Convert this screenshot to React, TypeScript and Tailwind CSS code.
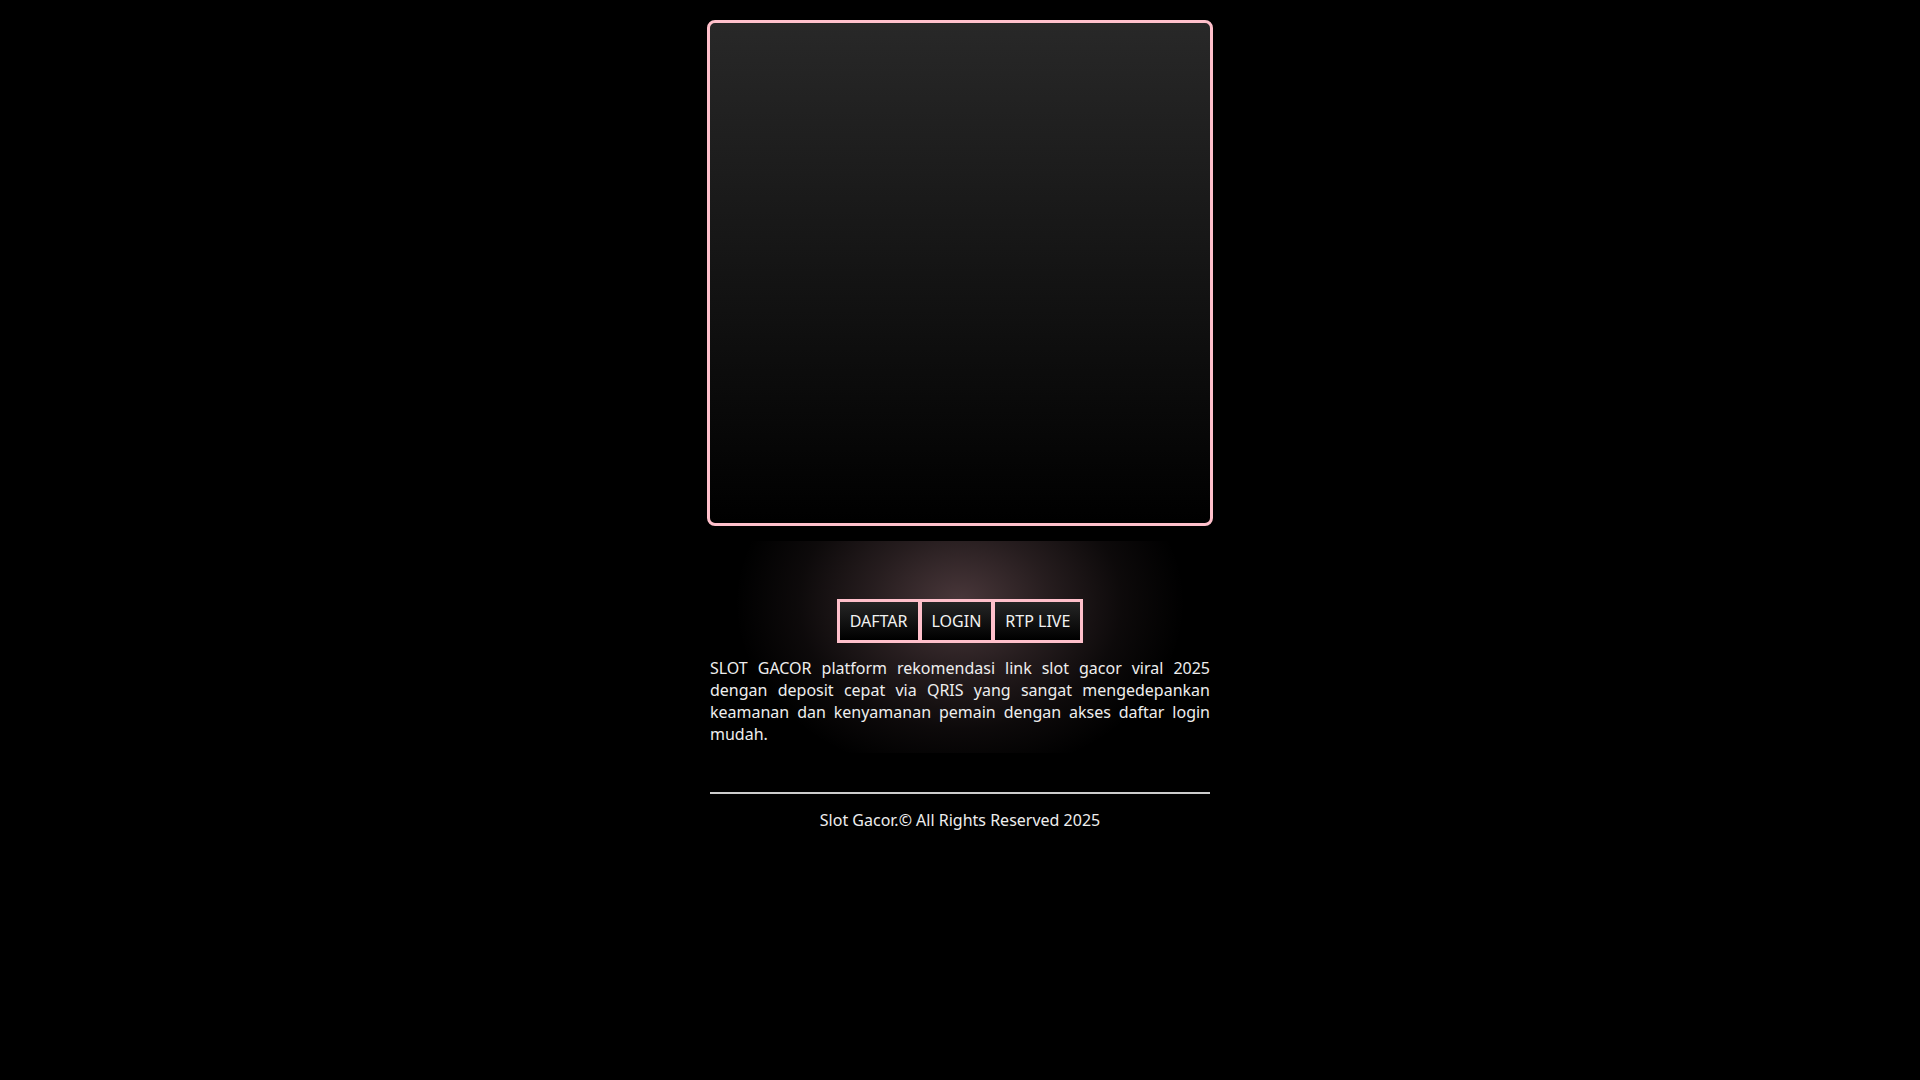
import React from "react";

export default function App() {
  return (
    <div
      className="min-h-screen w-full bg-black flex flex-col items-center"
      style={{ fontFamily: '"Noto Sans", "Open Sans", sans-serif' }}
    >
      <div className="w-[500px] mt-[20px] flex flex-col">
        <div className="w-[506px] -mx-[3px] h-[506px] border-[3px] border-[#ffc0cb] rounded-[8px] bg-[linear-gradient(to_bottom,#282828,#000000)]" />
        <div className="mt-[15px] pt-[58px] pb-[8px] bg-[radial-gradient(ellipse_225px_175px_at_50%_62px,rgba(255,192,203,0.29),rgba(255,192,203,0.15)_40%,rgba(255,192,203,0.05)_72%,transparent)]">
          <div className="flex justify-center">
            <a className="border-[3px] border-[#ffc0cb] bg-[linear-gradient(to_bottom,#262626,#000000)] px-[10px] py-[8px] text-[16px] leading-[22px] text-[#f2f2f2]">
              DAFTAR
            </a>
            <a className="-ml-[2px] border-[3px] border-[#ffc0cb] bg-[linear-gradient(to_bottom,#262626,#000000)] px-[10px] py-[8px] text-[16px] leading-[22px] text-[#f2f2f2]">
              LOGIN
            </a>
            <a className="-ml-[2px] border-[3px] border-[#ffc0cb] bg-[linear-gradient(to_bottom,#262626,#000000)] px-[10px] py-[8px] text-[16px] leading-[22px] text-[#f2f2f2]">
              RTP LIVE
            </a>
          </div>
          <p className="mt-[14px] text-justify text-[16px] leading-[22px] text-[#eeeeee]">
            SLOT GACOR platform rekomendasi link slot gacor viral 2025 dengan deposit cepat via QRIS yang sangat mengedepankan keamanan dan kenyamanan pemain dengan akses daftar login mudah.
          </p>
        </div>
        <div className="mt-[39px] h-[2px] bg-[#cccccc]" />
        <p className="mt-[15px] text-center text-[16px] leading-[22px] text-[#eeeeee]">
          Slot Gacor.© All Rights Reserved 2025
        </p>
      </div>
    </div>
  );
}
